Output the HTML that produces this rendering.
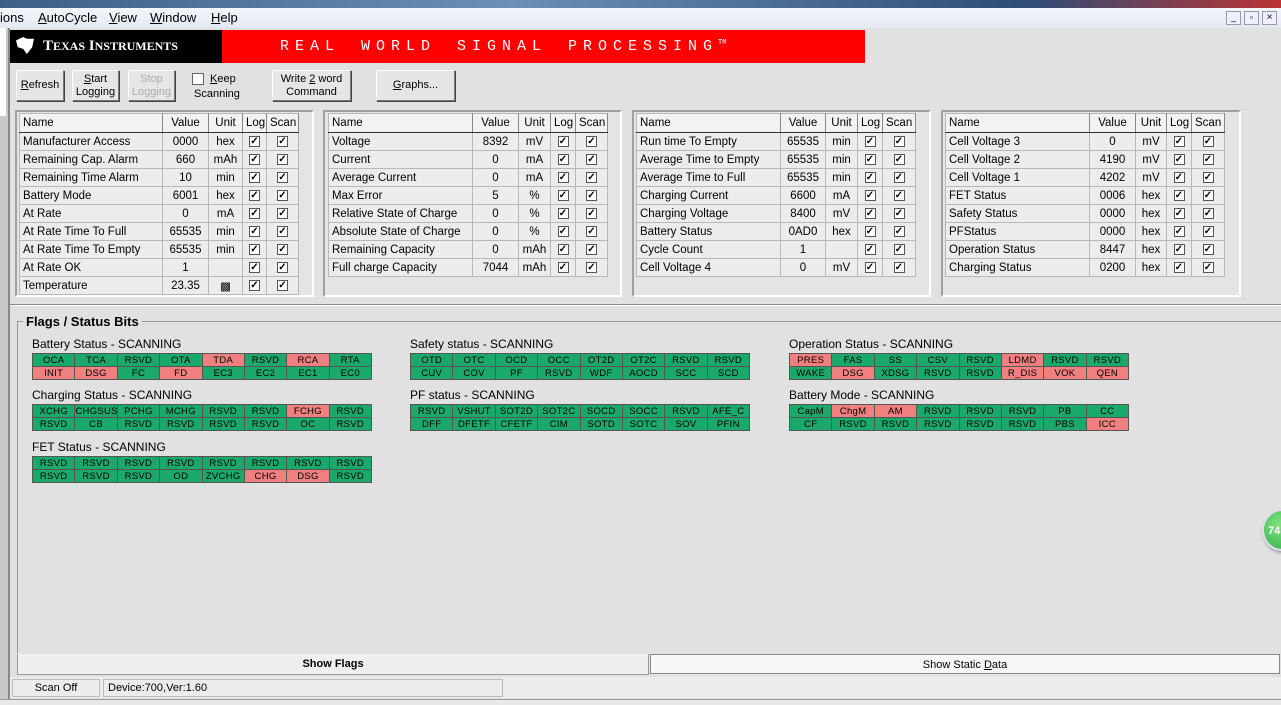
<!DOCTYPE html>
<html><head><meta charset="utf-8"><style>
*{margin:0;padding:0;box-sizing:border-box}
body{width:1281px;height:705px;overflow:hidden;background:#e1e1e1;font-family:"Liberation Sans",sans-serif;font-size:11px;color:#000;position:relative}
.a{position:absolute}
.menu{left:0;top:8px;width:1281px;height:20px;background:linear-gradient(#f3f6fb,#e3e9f3);font-size:13px}
.menu span{position:absolute;top:2px}
.btn{position:absolute;background:#e6e6e6;border:1px solid;border-color:#fff #777 #777 #fff;box-shadow:1px 1px 0 #444;text-align:center;font-size:11px;line-height:13px;display:flex;align-items:center;justify-content:center}
.panel{position:absolute;top:110px;height:187px;border:2px solid;border-color:#a0a0a0 #fff #fff #a0a0a0;background:#e4e4e4}
table.d{position:absolute;border-collapse:collapse;table-layout:fixed;background:#ececec;border:1px solid #333}
table.d td{height:18px;border:1px solid #b8b8b8;font-size:11.5px;padding:0 3px;white-space:nowrap;overflow:hidden}
table.d tr:first-child td{background:#f2f2f2;border-bottom:1px solid #333;height:19px;border-right:1px solid #888}
.c{text-align:center}
.ck{display:inline-block;width:11px;height:11px;border:1px solid #555;background:#fff;font-size:10px;line-height:9px;text-align:center;vertical-align:middle;font-weight:bold}
.fl{position:absolute;border-collapse:collapse;table-layout:fixed;width:340px;font-size:9.5px}
.fl td{border:1px solid #555;height:13px;text-align:center;background:#1aa96b;padding:0;white-space:nowrap;overflow:hidden;letter-spacing:.3px}
.fl td.r{background:#f08080}
.t{position:absolute;font-size:12px}
</style></head><body>
<div class="a" style="left:0;top:0;width:1281px;height:8px;background:linear-gradient(90deg,#3c5f88,#6a8fb8 40%,#2d4d78 80%,#b33)"></div>
<div class="a menu"><span style="left:0">ions</span><span style="left:38px"><u>A</u>utoCycle</span><span style="left:109px"><u>V</u>iew</span><span style="left:150px"><u>W</u>indow</span><span style="left:211px"><u>H</u>elp</span>
<span style="left:1226px;top:3px;width:15px;height:14px;border:1px solid #99a;background:#eef;font-size:9px;text-align:center">_</span>
<span style="left:1244px;top:3px;width:15px;height:14px;border:1px solid #99a;background:#eef;font-size:9px;text-align:center">▫</span>
<span style="left:1262px;top:3px;width:15px;height:14px;border:1px solid #99a;background:#eef;font-size:10px;text-align:center">×</span></div>
<div class="a" style="left:0;top:28px;width:8px;height:677px;background:#c8c8c8"></div>
<div class="a" style="left:0;top:28px;width:6px;height:88px;background:#fff"></div>
<div class="a" style="left:8px;top:28px;width:2px;height:672px;background:#888"></div>
<div class="a" style="left:10px;top:30px;width:212px;height:33px;background:#000;color:#fff;font-family:'Liberation Serif',serif;font-size:15px;font-weight:bold;padding:8px 0 0 33px">T<span style="font-size:12px">EXAS</span> I<span style="font-size:12px">NSTRUMENTS</span></div>
<div class="a" style="left:16px;top:37px;width:18px;height:17px;background:#fff;clip-path:polygon(0 20%,40% 0,60% 10%,100% 10%,90% 60%,60% 100%,40% 70%,10% 60%)"></div>
<div class="a" style="left:222px;top:30px;width:643px;height:33px;background:#f00;color:#fff;font-size:15px;letter-spacing:6px;word-spacing:6px;padding:8px 0 0 58px;font-family:'Liberation Mono',monospace;white-space:nowrap">REAL WORLD SIGNAL PROCESSING<sup style="font-size:7px;letter-spacing:0">TM</sup></div>
<div class="btn" style="left:16px;top:70px;width:48px;height:31px"><span><u>R</u>efresh</span></div>
<div class="btn" style="left:72px;top:70px;width:47px;height:31px"><span><u>S</u>tart<br>Logging</span></div>
<div class="btn" style="left:128px;top:70px;width:47px;height:31px;color:#aaa"><span>Stop<br>Logging</span></div>
<div class="a" style="left:192px;top:73px;width:12px;height:12px;border:1px solid #666;background:#fff"></div>
<div class="a" style="left:210px;top:73px"><u>K</u>eep</div><div class="a" style="left:194px;top:88px">Scanning</div>
<div class="btn" style="left:272px;top:70px;width:79px;height:31px"><span>Write <u>2</u> word<br>Command</span></div>
<div class="btn" style="left:376px;top:70px;width:79px;height:31px"><span><u>G</u>raphs...</span></div>

<div class="panel" style="left:15px;width:299px"></div>
<div class="panel" style="left:323px;width:299px"></div>
<div class="panel" style="left:632px;width:299px"></div>
<div class="panel" style="left:941px;width:300px"></div>

<table class="d" style="left:19px;top:113px;width:279px"><colgroup><col style="width:143px"><col style="width:46px"><col style="width:34px"><col style="width:24px"><col style="width:32px"></colgroup>
<tr><td>Name</td><td class="c">Value</td><td class="c">Unit</td><td class="c">Log</td><td class="c">Scan</td></tr>
<tr><td>Manufacturer Access</td><td class="c">0000</td><td class="c">hex</td><td class="c"><span class="ck">✓</span></td><td class="c"><span class="ck">✓</span></td></tr>
<tr><td>Remaining Cap. Alarm</td><td class="c">660</td><td class="c">mAh</td><td class="c"><span class="ck">✓</span></td><td class="c"><span class="ck">✓</span></td></tr>
<tr><td>Remaining Time Alarm</td><td class="c">10</td><td class="c">min</td><td class="c"><span class="ck">✓</span></td><td class="c"><span class="ck">✓</span></td></tr>
<tr><td>Battery Mode</td><td class="c">6001</td><td class="c">hex</td><td class="c"><span class="ck">✓</span></td><td class="c"><span class="ck">✓</span></td></tr>
<tr><td>At Rate</td><td class="c">0</td><td class="c">mA</td><td class="c"><span class="ck">✓</span></td><td class="c"><span class="ck">✓</span></td></tr>
<tr><td>At Rate Time To Full</td><td class="c">65535</td><td class="c">min</td><td class="c"><span class="ck">✓</span></td><td class="c"><span class="ck">✓</span></td></tr>
<tr><td>At Rate Time To Empty</td><td class="c">65535</td><td class="c">min</td><td class="c"><span class="ck">✓</span></td><td class="c"><span class="ck">✓</span></td></tr>
<tr><td>At Rate OK</td><td class="c">1</td><td class="c"></td><td class="c"><span class="ck">✓</span></td><td class="c"><span class="ck">✓</span></td></tr>
<tr><td>Temperature</td><td class="c">23.35</td><td class="c">▩</td><td class="c"><span class="ck">✓</span></td><td class="c"><span class="ck">✓</span></td></tr>
</table>

<table class="d" style="left:328px;top:113px;width:279px"><colgroup><col style="width:144px"><col style="width:46px"><col style="width:32px"><col style="width:25px"><col style="width:32px"></colgroup>
<tr><td>Name</td><td class="c">Value</td><td class="c">Unit</td><td class="c">Log</td><td class="c">Scan</td></tr>
<tr><td>Voltage</td><td class="c">8392</td><td class="c">mV</td><td class="c"><span class="ck">✓</span></td><td class="c"><span class="ck">✓</span></td></tr>
<tr><td>Current</td><td class="c">0</td><td class="c">mA</td><td class="c"><span class="ck">✓</span></td><td class="c"><span class="ck">✓</span></td></tr>
<tr><td>Average Current</td><td class="c">0</td><td class="c">mA</td><td class="c"><span class="ck">✓</span></td><td class="c"><span class="ck">✓</span></td></tr>
<tr><td>Max Error</td><td class="c">5</td><td class="c">%</td><td class="c"><span class="ck">✓</span></td><td class="c"><span class="ck">✓</span></td></tr>
<tr><td>Relative State of Charge</td><td class="c">0</td><td class="c">%</td><td class="c"><span class="ck">✓</span></td><td class="c"><span class="ck">✓</span></td></tr>
<tr><td>Absolute State of Charge</td><td class="c">0</td><td class="c">%</td><td class="c"><span class="ck">✓</span></td><td class="c"><span class="ck">✓</span></td></tr>
<tr><td>Remaining Capacity</td><td class="c">0</td><td class="c">mAh</td><td class="c"><span class="ck">✓</span></td><td class="c"><span class="ck">✓</span></td></tr>
<tr><td>Full charge Capacity</td><td class="c">7044</td><td class="c">mAh</td><td class="c"><span class="ck">✓</span></td><td class="c"><span class="ck">✓</span></td></tr>
</table>

<table class="d" style="left:636px;top:113px;width:279px"><colgroup><col style="width:144px"><col style="width:45px"><col style="width:32px"><col style="width:25px"><col style="width:33px"></colgroup>
<tr><td>Name</td><td class="c">Value</td><td class="c">Unit</td><td class="c">Log</td><td class="c">Scan</td></tr>
<tr><td>Run time To Empty</td><td class="c">65535</td><td class="c">min</td><td class="c"><span class="ck">✓</span></td><td class="c"><span class="ck">✓</span></td></tr>
<tr><td>Average Time to Empty</td><td class="c">65535</td><td class="c">min</td><td class="c"><span class="ck">✓</span></td><td class="c"><span class="ck">✓</span></td></tr>
<tr><td>Average Time to Full</td><td class="c">65535</td><td class="c">min</td><td class="c"><span class="ck">✓</span></td><td class="c"><span class="ck">✓</span></td></tr>
<tr><td>Charging Current</td><td class="c">6600</td><td class="c">mA</td><td class="c"><span class="ck">✓</span></td><td class="c"><span class="ck">✓</span></td></tr>
<tr><td>Charging Voltage</td><td class="c">8400</td><td class="c">mV</td><td class="c"><span class="ck">✓</span></td><td class="c"><span class="ck">✓</span></td></tr>
<tr><td>Battery Status</td><td class="c">0AD0</td><td class="c">hex</td><td class="c"><span class="ck">✓</span></td><td class="c"><span class="ck">✓</span></td></tr>
<tr><td>Cycle Count</td><td class="c">1</td><td class="c"></td><td class="c"><span class="ck">✓</span></td><td class="c"><span class="ck">✓</span></td></tr>
<tr><td>Cell Voltage 4</td><td class="c">0</td><td class="c">mV</td><td class="c"><span class="ck">✓</span></td><td class="c"><span class="ck">✓</span></td></tr>
</table>

<table class="d" style="left:945px;top:113px;width:279px"><colgroup><col style="width:144px"><col style="width:46px"><col style="width:31px"><col style="width:25px"><col style="width:33px"></colgroup>
<tr><td>Name</td><td class="c">Value</td><td class="c">Unit</td><td class="c">Log</td><td class="c">Scan</td></tr>
<tr><td>Cell Voltage 3</td><td class="c">0</td><td class="c">mV</td><td class="c"><span class="ck">✓</span></td><td class="c"><span class="ck">✓</span></td></tr>
<tr><td>Cell Voltage 2</td><td class="c">4190</td><td class="c">mV</td><td class="c"><span class="ck">✓</span></td><td class="c"><span class="ck">✓</span></td></tr>
<tr><td>Cell Voltage 1</td><td class="c">4202</td><td class="c">mV</td><td class="c"><span class="ck">✓</span></td><td class="c"><span class="ck">✓</span></td></tr>
<tr><td>FET Status</td><td class="c">0006</td><td class="c">hex</td><td class="c"><span class="ck">✓</span></td><td class="c"><span class="ck">✓</span></td></tr>
<tr><td>Safety Status</td><td class="c">0000</td><td class="c">hex</td><td class="c"><span class="ck">✓</span></td><td class="c"><span class="ck">✓</span></td></tr>
<tr><td>PFStatus</td><td class="c">0000</td><td class="c">hex</td><td class="c"><span class="ck">✓</span></td><td class="c"><span class="ck">✓</span></td></tr>
<tr><td>Operation Status</td><td class="c">8447</td><td class="c">hex</td><td class="c"><span class="ck">✓</span></td><td class="c"><span class="ck">✓</span></td></tr>
<tr><td>Charging Status</td><td class="c">0200</td><td class="c">hex</td><td class="c"><span class="ck">✓</span></td><td class="c"><span class="ck">✓</span></td></tr>
</table>

<div class="a" style="left:10px;top:304px;width:1271px;height:2px;border-top:1px solid #888;border-bottom:1px solid #fff"></div>
<div class="a" style="left:17px;top:321px;width:1270px;height:332px;border:1px solid #999;border-right:none;border-bottom:none"></div>
<div class="a" style="left:23px;top:314px;background:#e1e1e1;padding:0 3px;font-size:13px;font-weight:bold">Flags / Status Bits</div>

<div class="t" style="left:32px;top:337px">Battery Status - SCANNING</div>
<table class="fl" style="left:32px;top:353px"><tr><td>OCA</td><td>TCA</td><td>RSVD</td><td>OTA</td><td class="r">TDA</td><td>RSVD</td><td class="r">RCA</td><td>RTA</td></tr><tr><td class="r">INIT</td><td class="r">DSG</td><td>FC</td><td class="r">FD</td><td>EC3</td><td>EC2</td><td>EC1</td><td>EC0</td></tr></table>
<div class="t" style="left:32px;top:388px">Charging Status - SCANNING</div>
<table class="fl" style="left:32px;top:404px"><tr><td>XCHG</td><td>CHGSUSP</td><td>PCHG</td><td>MCHG</td><td>RSVD</td><td>RSVD</td><td class="r">FCHG</td><td>RSVD</td></tr><tr><td>RSVD</td><td>CB</td><td>RSVD</td><td>RSVD</td><td>RSVD</td><td>RSVD</td><td>OC</td><td>RSVD</td></tr></table>
<div class="t" style="left:32px;top:440px">FET Status - SCANNING</div>
<table class="fl" style="left:32px;top:456px"><tr><td>RSVD</td><td>RSVD</td><td>RSVD</td><td>RSVD</td><td>RSVD</td><td>RSVD</td><td>RSVD</td><td>RSVD</td></tr><tr><td>RSVD</td><td>RSVD</td><td>RSVD</td><td>OD</td><td>ZVCHG</td><td class="r">CHG</td><td class="r">DSG</td><td>RSVD</td></tr></table>

<div class="t" style="left:410px;top:337px">Safety status - SCANNING</div>
<table class="fl" style="left:410px;top:353px"><tr><td>OTD</td><td>OTC</td><td>OCD</td><td>OCC</td><td>OT2D</td><td>OT2C</td><td>RSVD</td><td>RSVD</td></tr><tr><td>CUV</td><td>COV</td><td>PF</td><td>RSVD</td><td>WDF</td><td>AOCD</td><td>SCC</td><td>SCD</td></tr></table>
<div class="t" style="left:410px;top:388px">PF status - SCANNING</div>
<table class="fl" style="left:410px;top:404px"><tr><td>RSVD</td><td>VSHUT</td><td>SOT2D</td><td>SOT2C</td><td>SOCD</td><td>SOCC</td><td>RSVD</td><td>AFE_C</td></tr><tr><td>DFF</td><td>DFETF</td><td>CFETF</td><td>CIM</td><td>SOTD</td><td>SOTC</td><td>SOV</td><td>PFIN</td></tr></table>

<div class="t" style="left:789px;top:337px">Operation Status - SCANNING</div>
<table class="fl" style="left:789px;top:353px"><tr><td class="r">PRES</td><td>FAS</td><td>SS</td><td>CSV</td><td>RSVD</td><td class="r">LDMD</td><td>RSVD</td><td>RSVD</td></tr><tr><td>WAKE</td><td class="r">DSG</td><td>XDSG</td><td>RSVD</td><td>RSVD</td><td class="r">R_DIS</td><td class="r">VOK</td><td class="r">QEN</td></tr></table>
<div class="t" style="left:789px;top:388px">Battery Mode - SCANNING</div>
<table class="fl" style="left:789px;top:404px"><tr><td>CapM</td><td class="r">ChgM</td><td class="r">AM</td><td>RSVD</td><td>RSVD</td><td>RSVD</td><td>PB</td><td>CC</td></tr><tr><td>CF</td><td>RSVD</td><td>RSVD</td><td>RSVD</td><td>RSVD</td><td>RSVD</td><td>PBS</td><td class="r">ICC</td></tr></table>

<div class="a" style="left:1262px;top:509px;width:40px;height:42px;border-radius:50%;background:radial-gradient(circle at 40% 35%,#7ee07e,#2fb04a);border:2px solid #dde;box-shadow:1px 2px 3px #999;color:#fff;font-weight:bold;font-size:11px;padding:14px 0 0 4px">74</div>

<div class="a" style="left:17px;top:654px;width:632px;height:21px;background:#efefef;border:1px solid #999;border-top:none;text-align:center;font-size:11px;font-weight:bold;line-height:21px">Show Flags</div>
<div class="a" style="left:650px;top:654px;width:630px;height:20px;background:#f7f7f7;border:1px solid #888;text-align:center;font-size:11px;line-height:20px">Show Static <u>D</u>ata</div>
<div class="a" style="left:10px;top:677px;width:1271px;height:21px;background:#ececec"></div>
<div class="a" style="left:12px;top:679px;width:88px;height:18px;border:1px solid #bbb;text-align:center;line-height:17px">Scan Off</div>
<div class="a" style="left:103px;top:679px;width:400px;height:18px;border:1px solid #bbb;padding-left:4px;line-height:17px">Device:700,Ver:1.60</div>
<div class="a" style="left:0;top:699px;width:1281px;height:6px;background:#e8e8e8;border-top:1px solid #999"></div>
</body></html>
